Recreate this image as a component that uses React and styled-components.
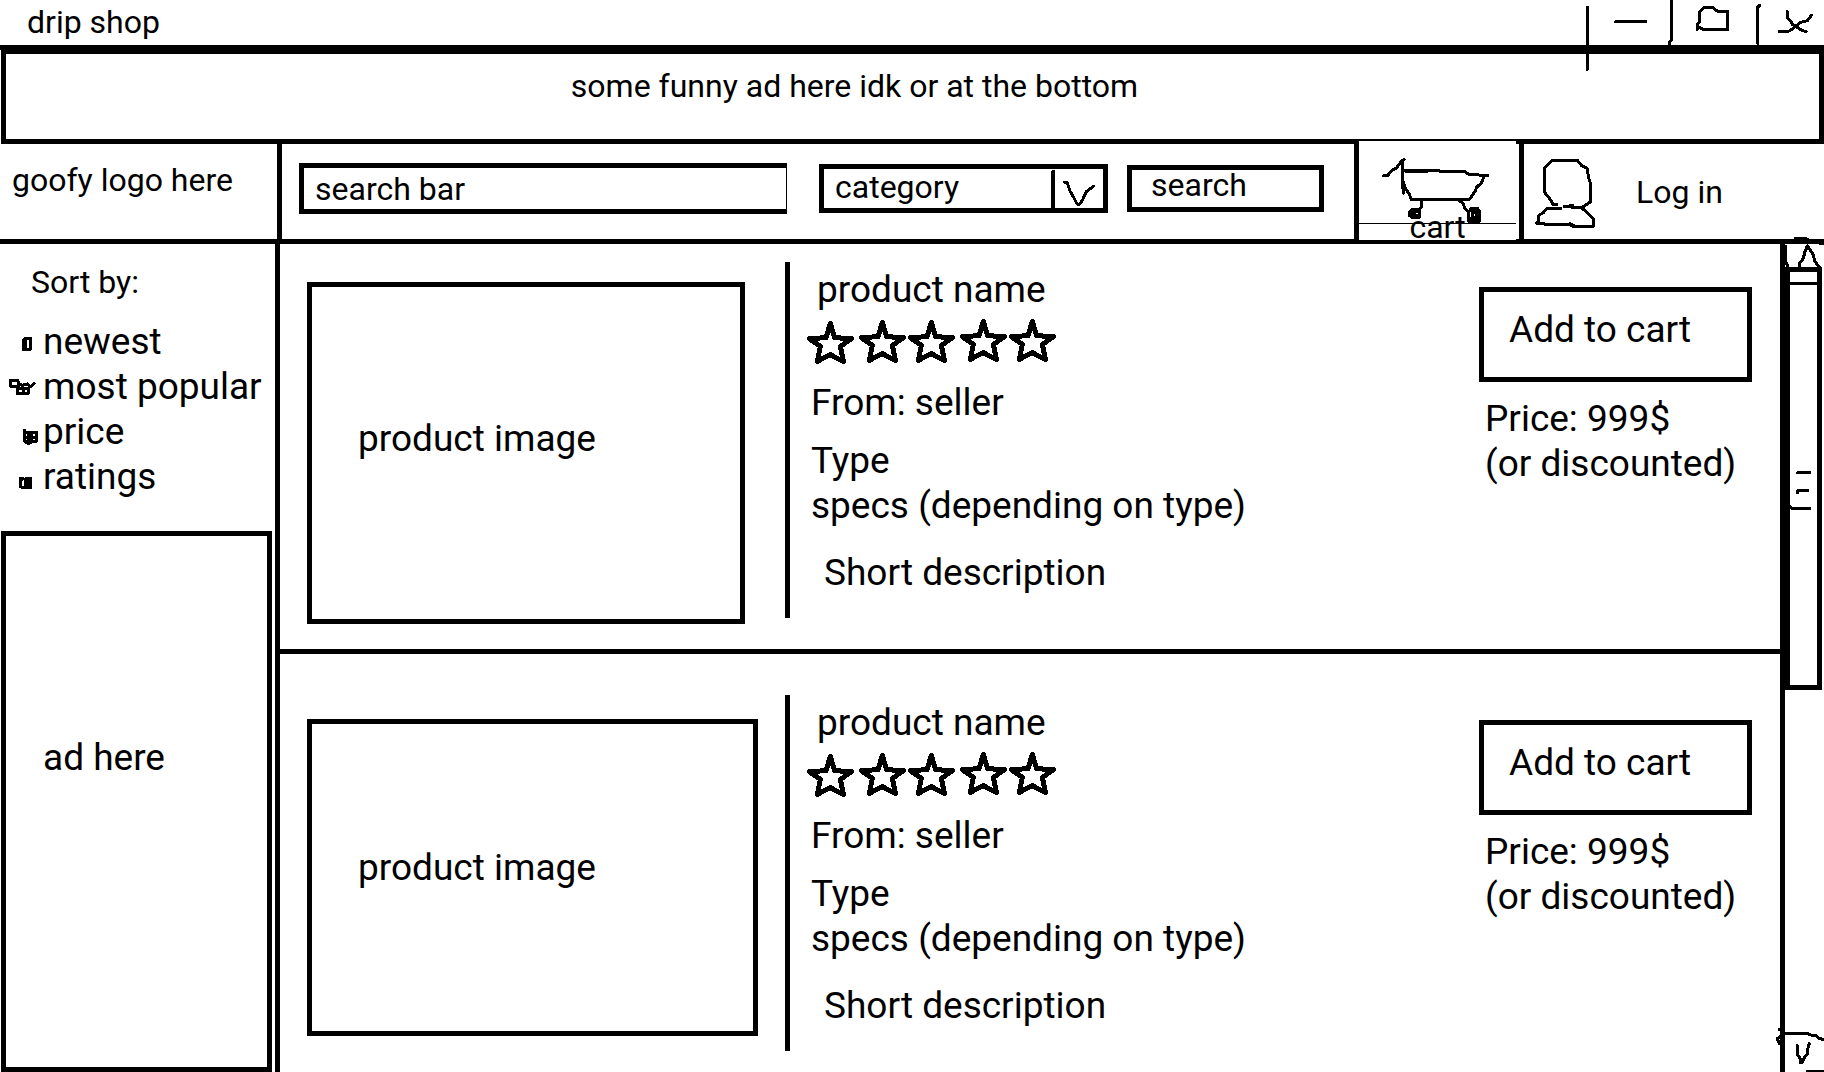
import React from "react";
import styled, { createGlobalStyle } from "styled-components";

const INK = "#000";
const LINE = "5px";
const SMALL = "32px";
const LARGE = "37px";

const GlobalStyle = createGlobalStyle`
  *, *::before, *::after { box-sizing: border-box; }
  body {
    margin: 0;
    background: #fff;
    color: ${INK};
    font-family: Roboto, "Liberation Sans", sans-serif;
    font-size: ${SMALL};
    line-height: 40px;
  }
  h1, h2, p, ul { margin: 0; padding: 0; font-size: inherit; font-weight: 400; }
  button, input, select { font: inherit; color: inherit; }
`;

const Page = styled.div`
  display: flex;
  flex-direction: column;
  min-height: 100vh;
`;

const Sketch = styled.svg`
  display: block;
  flex: none;
  overflow: visible;
  fill: none;
  stroke: ${INK};
  stroke-width: ${(p) => p.$weight || 9};
  stroke-linecap: round;
  stroke-linejoin: round;
  shape-rendering: crispEdges;
`;

const BareButton = styled.button`
  display: block;
  padding: 0;
  border: 0;
  background: none;
  cursor: pointer;
`;

/* Title bar */
const TitleBar = styled.header`
  display: flex;
  align-items: center;
  height: 50px;
  padding-left: 27px;
  border-bottom: ${LINE} solid ${INK};
`;

const WindowTitle = styled.h1`
  flex: 1;
  padding-bottom: 2px;
`;

const WindowControls = styled.div`
  display: flex;
  position: relative;
  z-index: 1;
`;

/* Banner */
const Banner = styled.section`
  margin-left: 1px;
  padding: 12px 116px 33px 0;
  border: ${LINE} solid ${INK};
  border-top-width: 4px;
  text-align: center;
`;

/* Header */
const Header = styled.div`
  display: flex;
  height: 100px;
  border-bottom: ${LINE} solid ${INK};
`;

const Logo = styled.div`
  display: flex;
  align-items: center;
  width: 282px;
  padding: 0 0 23px 12px;
  border-right: ${LINE} solid ${INK};
`;

const SearchForm = styled.form`
  display: flex;
  flex: 1;
  align-items: center;
  padding: 0 30px 6px 17px;
`;

const SearchInput = styled.input`
  flex: 1;
  min-width: 0;
  height: 51px;
  margin-right: 32px;
  padding: 0 11px;
  border: ${LINE} solid ${INK};
  border-right-width: 1px;
  border-radius: 0;
  background: #fff;
  outline: none;
  &::placeholder { color: ${INK}; opacity: 1; }
`;

const SelectBox = styled.div`
  position: relative;
  width: 289px;
  height: 49px;
  margin-right: 19px;
`;

const Select = styled.select`
  width: 100%;
  height: 100%;
  padding: 0 60px 3px 11px;
  border: ${LINE} solid ${INK};
  border-radius: 0;
  background: #fff;
  line-height: 36px;
  appearance: none;
`;

const SelectArrow = styled.span`
  position: absolute;
  top: 0;
  right: 4px;
  pointer-events: none;
`;

const SearchButton = styled.button`
  width: 197px;
  height: 47px;
  padding: 0 0 7px 19px;
  border: ${LINE} solid ${INK};
  background: #fff;
  line-height: 30px;
  text-align: left;
`;

const CartCell = styled.div`
  width: 170px;
  border: solid ${INK};
  border-width: 0 ${LINE};
`;

const CartButton = styled(BareButton)`
  display: grid;
  width: 157px;
  margin-top: -3px;
  background: #fff;
  & > * { grid-area: 1 / 1; }
`;

const CartLabel = styled.span`
  align-self: end;
  justify-self: center;
  line-height: 26px;
`;

const AccountButton = styled(BareButton)`
  display: flex;
  align-items: center;
  gap: 41px;
  width: 300px;
  padding: 0 0 0 11px;
`;

/* Body */
const Body = styled.div`
  display: grid;
  flex: 1;
  grid-template-columns: 280px 1fr 44px;
`;

const Sidebar = styled.aside`
  display: flex;
  flex-direction: column;
  padding: 18px 3px 0 1px;
  border-right: ${LINE} solid ${INK};
`;

const SortTitle = styled.h2`
  margin-bottom: 17px;
  padding-left: 30px;
`;

const SortOption = styled.label`
  display: flex;
  position: relative;
  font-size: ${LARGE};
  line-height: 45px;
  white-space: nowrap;
`;

const SortRadio = styled.input`
  position: absolute;
  width: 42px;
  height: 45px;
  margin: 0;
  opacity: 0;
`;

const SideAd = styled.section`
  flex: 1;
  margin-top: 32px;
  padding: 199px 0 0 37px;
  border: ${LINE} solid ${INK};
  font-size: ${LARGE};
  line-height: 45px;
`;

const Product = styled.article`
  display: flex;
  align-items: flex-start;
  padding: ${(p) => p.$top}px 28px 25px 27px;
  font-size: ${LARGE};
  line-height: 45px;
  &:not(:last-child) { border-bottom: ${LINE} solid ${INK}; }
  &:last-child { padding-bottom: 0; }
`;

const ImageColumn = styled.div`
  width: 478px;
  padding-top: ${(p) => p.$offset}px;
`;

const ProductImage = styled.div`
  display: flex;
  align-items: center;
  width: ${(p) => p.$width}px;
  height: ${(p) => p.$height}px;
  padding: 0 0 ${(p) => p.$lift}px 46px;
  border: ${LINE} solid ${INK};
`;

const Info = styled.div`
  flex: 1;
  min-width: 0;
  height: 356px;
  padding: 5px 0 0 17px;
  border-left: ${LINE} solid ${INK};
`;

const Name = styled.h2`
  padding-left: 10px;
`;

const Stars = styled.div`
  margin: 6px 0 16px;
`;

const Detail = styled.p`
  padding-left: 4px;
`;

const Specs = styled.div`
  margin: 13px 0 22px;
`;

const Description = styled.p`
  padding-left: 17px;
`;

const Purchase = styled.div`
  width: 273px;
  padding-top: 25px;
`;

const AddButton = styled.button`
  display: block;
  width: 100%;
  height: 95px;
  margin-bottom: 14px;
  padding: 0 0 10px 25px;
  border: ${LINE} solid ${INK};
  background: #fff;
  text-align: left;
`;

const Price = styled.p`
  padding-left: 6px;
  white-space: nowrap;
`;

/* Scroll bar */
const ScrollBar = styled.div`
  display: flex;
  flex-direction: column;
  border-left: ${LINE} solid ${INK};
`;

const Thumb = styled.div`
  width: 37px;
  height: 423px;
  border: ${LINE} solid ${INK};
`;

const ThumbCap = styled.div`
  height: 13px;
  border-bottom: 3px solid ${INK};
`;

const Grip = styled.div`
  padding-top: 186px;
`;

const DownButton = styled(BareButton)`
  margin-top: auto;
`;

const sortOptions = [
  {
    name: "newest",
    box: "0 237 126 135",
    d: "M66 328V300L75 294H88V328ZM72 300V325",
  },
  {
    name: "most popular",
    box: "0 372 126 135",
    d: "M28 420H50L56 434L48 440L28 438ZM54 430L62 436L80 432L84 438L92 438L100 431M48 445V460H82V445H52M66 440V460",
  },
  {
    name: "price",
    box: "0 507 126 135",
    d: "M71 570V602L78 609H88V600M72 576H106V604H82V582M92 582V600M74 592H98",
  },
  {
    name: "ratings",
    box: "0 642 126 135",
    d: "M59 714V740L64 743H88V714M74 716V742M62 718L66 714M82 716V740",
  },
];

const products = [
  { id: 1, top: 18, offset: 20, width: 438, height: 342, lift: 30 },
  { id: 2, top: 41, offset: 24, width: 451, height: 317, lift: 20 },
];

const starOffsets = [
  [0, 0],
  [156, -3],
  [303, -3],
  [459, -6],
  [606, -6],
];

function ControlButtons() {
  return (
    <WindowControls>
      <BareButton aria-label="Minimize">
        <Sketch width="84" height="45" viewBox="78 0 252 135">
          <path d="M82 22V208M167 65H257" />
        </Sketch>
      </BareButton>
      <BareButton aria-label="Maximize">
        <Sketch width="86" height="45" viewBox="330 0 258 135">
          <path d="M335 4V118L329 126V134M412 88L418 82L430 88H503V35H475L458 23H432L419 36V66L412 74V88" />
        </Sketch>
      </BareButton>
      <BareButton aria-label="Close">
        <Sketch width="68" height="45" viewBox="588 0 204 135">
          <path d="M599 16L593 22V130M682 35V52L692 64L698 74L712 82L724 90L738 95M658 95H684L698 86L708 78L722 67L742 62L754 46" />
        </Sketch>
      </BareButton>
    </WindowControls>
  );
}

function CartDrawing() {
  return (
    <Sketch width="157" height="99" viewBox="57 33 471 297">
      <path d="M131 137H142L160 118L168 116L186 92L192 88M186 92V155L191 190M190 155L197 178L207 190L214 208H388L405 185L410 172L425 158L432 140M195 123H265M195 120H293L300 125H375L385 132L405 134L443 137" />
      <path d="M244 210V232L236 240L216 239L208 246V256L216 262H238V244L222 246L216 252L232 256" />
      <path d="M357 210L370 222L374 235L386 246M386 272V246L394 234H412L418 244V274H386L396 262V248L408 246V262L390 266L412 268V240L394 242" />
      <path d="M57 280H528" strokeWidth="3" strokeLinecap="butt" />
    </Sketch>
  );
}

function PersonDrawing() {
  return (
    <Sketch width="60" height="71" viewBox="588 81 180 213">
      <path d="M653 226H642L636 214L618 192L616 118L638 95H716L728 110L744 118L750 150L755 165V218L740 228L728 236H702L692 231M676 233H690L702 228" />
      <path d="M666 238H625L612 252L600 258L598 280L591 282H612L618 287H692L706 293H762V268L728 236M692 284L704 290" />
    </Sketch>
  );
}

function StarRow() {
  return (
    <Sketch
      width="249"
      height="46"
      viewBox="81 204 747 138"
      $weight={15}
      role="img"
      aria-label="rating"
    >
      {starOffsets.map(([x, y]) => (
        <path
          key={x}
          transform={`translate(${x} ${y})`}
          d="M151 220L138 263L88 266L121 289L112 334L151 314L190 334L181 289L215 266L164 263Z"
        />
      ))}
    </Sketch>
  );
}

function ProductRow({ item }) {
  return (
    <Product $top={item.top}>
      <ImageColumn $offset={item.offset}>
        <ProductImage $width={item.width} $height={item.height} $lift={item.lift}>
          product image
        </ProductImage>
      </ImageColumn>
      <Info>
        <Name>product name</Name>
        <Stars>
          <StarRow />
        </Stars>
        <Detail>From: seller</Detail>
        <Specs>
          <Detail>Type</Detail>
          <Detail>specs (depending on type)</Detail>
        </Specs>
        <Description>Short description</Description>
      </Info>
      <Purchase>
        <AddButton type="button">Add to cart</AddButton>
        <Price>Price: 999$</Price>
        <Price>(or discounted)</Price>
      </Purchase>
    </Product>
  );
}

export default function App() {
  return (
    <Page>
      <GlobalStyle />
      <TitleBar>
        <WindowTitle>drip shop</WindowTitle>
        <ControlButtons />
      </TitleBar>
      <Banner>some funny ad here idk or at the bottom</Banner>
      <Header>
        <Logo>goofy logo here</Logo>
        <SearchForm onSubmit={(e) => e.preventDefault()}>
          <SearchInput type="text" placeholder="search bar" aria-label="search bar" />
          <SelectBox>
            <Select aria-label="category">
              <option>category</option>
            </Select>
            <SelectArrow>
              <Sketch width="53" height="49" viewBox="1051 163 53 49" $weight={3}>
                <path d="M1053 171V209" strokeWidth="4" />
                <path d="M1064 181H1067L1070 190L1074 197L1077 203H1080L1083 198L1086 191L1090 188L1094 185" />
              </Sketch>
            </SelectArrow>
          </SelectBox>
          <SearchButton type="submit">search</SearchButton>
        </SearchForm>
        <CartCell>
          <CartButton type="button">
            <CartDrawing />
            <CartLabel>cart</CartLabel>
          </CartButton>
        </CartCell>
        <AccountButton type="button">
          <PersonDrawing />
          Log in
        </AccountButton>
      </Header>
      <Body>
        <Sidebar>
          <SortTitle id="sort-title">Sort by:</SortTitle>
          <div role="radiogroup" aria-labelledby="sort-title">
            {sortOptions.map((option) => (
              <SortOption key={option.name}>
                <SortRadio type="radio" name="sort" value={option.name} />
                <Sketch width="42" height="45" viewBox={option.box}>
                  <path d={option.d} />
                </Sketch>
                {option.name}
              </SortOption>
            ))}
          </div>
          <SideAd>ad here</SideAd>
        </Sidebar>
        <main>
          {products.map((item) => (
            <ProductRow key={item.id} item={item} />
          ))}
        </main>
        <ScrollBar>
          <BareButton aria-label="Scroll up">
            <Sketch width="39" height="23" viewBox="1035 72 117 69">
              <path d="M1066 54H1094L1108 62L1126 66L1148 72M1066 60H1110M1079 153V130L1090 115L1095 95L1102 78L1118 100L1125 125L1138 142M1037 80V125L1043 138" />
            </Sketch>
          </BareButton>
          <Thumb>
            <ThumbCap />
            <Grip>
              <Sketch width="27" height="39" viewBox="1050 756 81 117">
                <path d="M1073 761H1109M1073 821V815H1103M1050 862L1058 869H1109" />
              </Sketch>
            </Grip>
          </Thumb>
          <DownButton aria-label="Scroll down">
            <Sketch width="39" height="39" viewBox="255 159 117 117">
              <path d="M238 149H246M258 160H320L335 166L350 168L358 175L370 179M244 166L232 176L238 190H248M292 197V222L300 235V248H306L312 234L322 222L325 197L328 191M322 273H370M246 172V272" />
            </Sketch>
          </DownButton>
        </ScrollBar>
      </Body>
    </Page>
  );
}
